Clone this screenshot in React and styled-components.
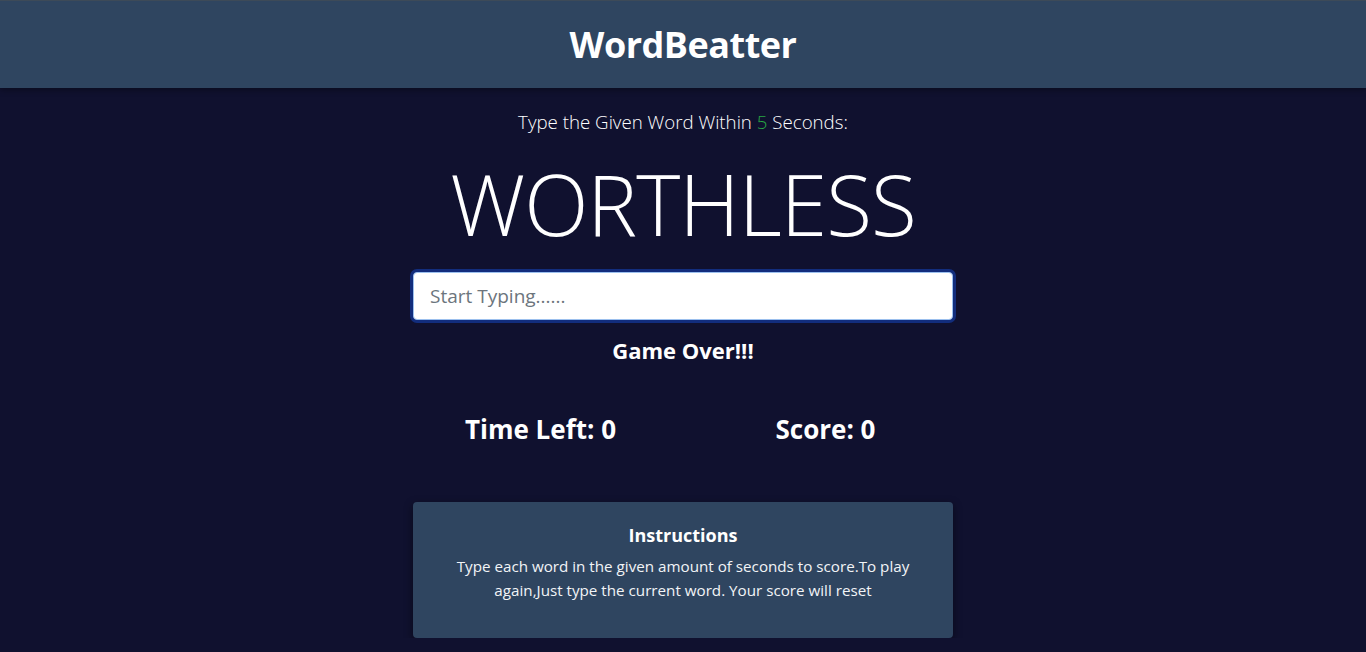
import React from "react";
import styled, { createGlobalStyle } from "styled-components";

const GlobalStyle = createGlobalStyle`
  * {
    box-sizing: border-box;
  }
  body {
    margin: 0;
    background: #10112f;
    color: #fff;
    font-family: "Open Sans", "Noto Sans", sans-serif;
  }
`;

const Navbar = styled.header`
  height: 88px;
  background: #2f4560;
  border-top: 1px solid #3d4a58;
  display: flex;
  align-items: center;
  justify-content: center;
  box-shadow: 0 2px 6px rgba(0, 0, 0, 0.35);
  h1 {
    margin: 0;
    font-size: 36px;
    font-weight: 700;
    letter-spacing: -0.5px;
  }
`;

const Main = styled.main`
  width: 540px;
  margin: 0 auto;
  padding-top: 20px;
  text-align: center;
`;

const Lead = styled.p`
  margin: 0;
  font-size: 18.7px;
  font-weight: 300;
  line-height: 28px;
  span {
    color: #28a745;
  }
`;

const Word = styled.h2`
  margin: 20px 0 0;
  font-size: 84px;
  font-weight: 300;
  line-height: 96px;
  letter-spacing: -1px;
`;

const Input = styled.input`
  display: block;
  width: 100%;
  height: 48px;
  margin-top: 20px;
  padding: 6px 16px;
  font-family: inherit;
  font-size: 19px;
  color: #495057;
  background: #fff;
  border: 1px solid #9cc0ee;
  border-radius: 4px;
  outline: none;
  box-shadow: 0 0 0 3px rgba(20, 70, 190, 0.55);
  &::placeholder {
    color: #6c757d;
  }
`;

const Status = styled.h5`
  margin: 16px 0 0;
  font-size: 22px;
  font-weight: 700;
  line-height: 28px;
`;

const Scores = styled.div`
  display: grid;
  grid-template-columns: 1fr 1fr;
  gap: 30px;
  margin-top: 48px;
  h3 {
    margin: 0;
    font-size: 26px;
    font-weight: 700;
    line-height: 34px;
  }
`;

const Card = styled.section`
  margin-top: 56px;
  background: #2f4560;
  border-radius: 4px;
  padding: 20px 36px 36px;
  box-shadow: 0 3px 10px rgba(0, 0, 0, 0.45);
  h5 {
    margin: 0 0 6px;
    font-size: 18px;
    font-weight: 700;
    line-height: 26px;
  }
  p {
    margin: 0;
    font-size: 15.2px;
    line-height: 24px;
    color: #f2f4f7;
  }
`;

export default function App() {
  return (
    <>
      <GlobalStyle />
      <Navbar>
        <h1>WordBeatter</h1>
      </Navbar>
      <Main>
        <Lead>
          Type the Given Word Within <span>5</span> Seconds:
        </Lead>
        <Word>WORTHLESS</Word>
        <Input type="text" placeholder="Start Typing......" autoFocus />
        <Status>Game Over!!!</Status>
        <Scores>
          <h3>Time Left: 0</h3>
          <h3>Score: 0</h3>
        </Scores>
        <Card>
          <h5>Instructions</h5>
          <p>
            Type each word in the given amount of seconds to score.To play
            again,Just type the current word. Your score will reset
          </p>
        </Card>
      </Main>
    </>
  );
}
